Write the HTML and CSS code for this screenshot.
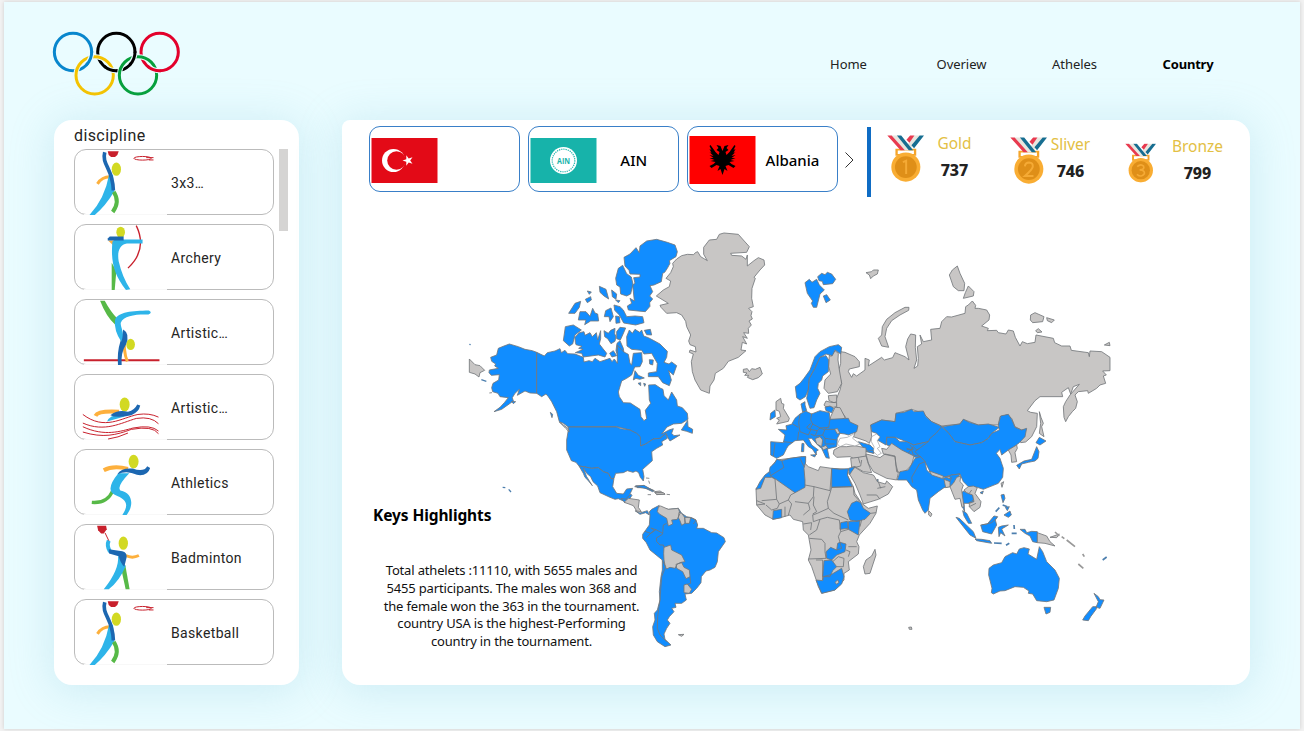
FILE: index.html
```html
<!DOCTYPE html>
<html lang="en">
<head>
<meta charset="utf-8">
<title>Olympics - Country</title>
<link rel="stylesheet" href="styles.css">
</head>
<body>
<svg width="0" height="0" class="defs" aria-hidden="true">
  <symbol id="basketball" viewBox="73 477 279 199">
    <path fill="#c8202c" d="M174 484H207L203 495L196 501H184L177 495Z"/>
    <g fill="none" stroke="#c8202c" stroke-width="3"><ellipse cx="279" cy="505" rx="26" ry="5.500"/><path d="M290 503H312M298 510H312"/></g>
    <ellipse cx="200" cy="538" rx="14" ry="20" fill="#d2d922"/>
    <path d="M143 582Q158 560 182 561" fill="none" stroke="#fdb03d" stroke-width="9"/>
    <path fill="#2eb4e9" d="M178 555H190L193 606Q168 648 135 676H119Q165 628 178 555Z"/>
    <path d="M192 606Q212 635 189 667" fill="none" stroke="#57b947" stroke-width="12"/>
    <path d="M165 487C155 525 190 535 191 602" fill="none" stroke="#1c67b1" stroke-width="11"/>
  </symbol>
  <symbol id="medal" viewBox="80 78 112 142">
    <path d="M110 124V136M164 124V136M108 122H166V138H108Z" fill="#fff" stroke="#f5a52b" stroke-width="5"/>
    <path fill="#e8e6df" d="M92 79H112L150 124H124ZM162 79H180L150 124H130Z"/>
    <path fill="#e83a4f" d="M81 79H94L134 124H121ZM150 79H163L148 101L139 92Z"/>
    <path fill="#176e91" d="M110 79H123L159 124H146ZM179 79H192L162 118L154 109Z"/>
    <circle cx="137" cy="175" r="44" fill="#f9ad33"/><circle cx="137" cy="175" r="33" fill="#df8f18"/>
  </symbol>
</svg>
<div class="page">
  <header class="top">
    <svg class="rings" viewBox="156 94 387 195" fill="none" stroke-width="9">
      <circle cx="219" cy="157" r="56" stroke="#0886cd"/>
      <circle cx="349" cy="157" r="56" stroke="#000"/>
      <circle cx="479" cy="157" r="56" stroke="#e3002b"/>
      <g stroke="#eafcff" stroke-width="15"><path d="M228 227A56 56 0 0 1 249 183M358 227A56 56 0 0 1 379 183M284 171A56 56 0 0 1 320 184M414 171A56 56 0 0 1 450 184"/></g>
      <circle cx="284" cy="227" r="56" stroke="#f5c300"/>
      <circle cx="414" cy="227" r="56" stroke="#07a03c"/>
      <g stroke="#eafcff" stroke-width="15"><path d="M275 160A56 56 0 0 1 263 191M405 160A56 56 0 0 1 393 191M318 204A56 56 0 0 0 349 213M448 204A56 56 0 0 0 479 213"/></g>
      <path d="M275 155A56 56 0 0 1 259 196" stroke="#0886cd"/><path d="M405 155A56 56 0 0 1 389 196M313 200A56 56 0 0 0 352 213" stroke="#000"/><path d="M443 200A56 56 0 0 0 482 213" stroke="#e3002b"/>
    </svg>
    <nav class="nav"><a>Home</a><a>Overiew</a><a>Atheles</a><a class="active">Country</a></nav>
  </header>
  <div class="content">
    <aside class="card sidebar">
      <h2>discipline</h2>
      <div class="list-wrap">
      <div class="list">
        <div class="tile"><svg><use href="#basketball"/></svg><span>3x3<i>...</i></span></div>
        <div class="tile"><svg viewBox="73 28 279 199">
          <path d="M260 33Q295 105 235 161" fill="none" stroke="#c8202c" stroke-width="4"/>
          <ellipse cx="213" cy="53" rx="13" ry="17" fill="#d2d922"/><path fill="#fdb03d" d="M175 78H197L190 92Z"/>
          <path fill="#57b947" d="M186 145L200 170L195 227H186Z"/>
          <path fill="#2eb4e9" d="M188 82Q192 75 205 75H279V87H232C210 90 202 112 207 140Q218 188 242 225L229 227C192 180 183 140 188 82Z"/>
          <path fill="#1c67b1" d="M174 72L180 66H222V78H174Z"/></svg><span>Archery</span></div>
        <div class="tile"><svg viewBox="73 253 279 199">
          <path d="M102 438H330" stroke="#c8202c" stroke-width="6"/>
          <path fill="#57b947" d="M151 258H165Q182 290 203 312L196 330Q169 305 151 258Z"/>
          <path d="M225 360Q220 410 233 441" fill="none" stroke="#fdb03d" stroke-width="9"/>
          <ellipse cx="243" cy="390" rx="13" ry="17" fill="#d2d922"/>
          <path fill="#1c67b1" d="M221 345Q242 358 229 390Q213 414 216 452H205Q202 412 212 382Z"/>
          <path fill="#2eb4e9" d="M298 288Q310 294 297 300C258 299 222 303 213 325C213 342 226 351 215 382Q192 347 196 316C205 292 248 289 298 288Z"/></svg><span>Artistic<i>...</i></span></div>
        <div class="tile"><svg viewBox="73 478 279 199">
          <path d="M137 604Q145 588 208 592" fill="none" stroke="#fdb03d" stroke-width="12"/>
          <ellipse cx="225" cy="570" rx="15" ry="21" fill="#d2d922"/>
          <path fill="#2eb4e9" d="M172 621Q180 602 210 600L225 606Z"/><path fill="#1c67b1" d="M182 602Q205 584 235 592Q255 587 263 570L272 573Q268 593 245 602Q200 612 182 602Z"/>
          <path d="M99 600C165 650 215 610 265 600Q300 595 327 608M99 626C165 655 215 625 260 612Q305 605 327 628M99 637C165 668 215 650 250 641Q305 630 327 650M99 653C160 672 200 662 245 645Q310 633 327 658M175 674Q205 670 235 656" fill="none" stroke="#c8202c" stroke-width="3"/></svg><span>Artistic<i>...</i></span></div>
        <div class="tile"><svg viewBox="73 27 279 199">
          <path d="M162 91Q190 76 235 87" fill="none" stroke="#fdb03d" stroke-width="12"/><ellipse cx="252" cy="65" rx="15" ry="21" fill="#d2d922"/>
          <path d="M126 188Q172 192 189 153" fill="none" stroke="#57b947" stroke-width="10"/>
          <path fill="#2eb4e9" d="M206 100H239Q200 140 212 152C252 160 252 200 231 226H218C240 192 230 180 195 165Q165 150 206 100Z"/>
          <path fill="#1c67b1" d="M203 103Q214 83 249 86Q283 98 293 79L302 84Q294 110 262 105Q232 90 203 103Z"/></svg><span>Athletics</span></div>
        <div class="tile"><svg viewBox="73 253 279 199">
          <path fill="#c8202c" d="M142 258H169L171 269L162 282H154L145 272Z"/><path d="M166 280L178 305" stroke="#c8202c" stroke-width="3"/>
          <path d="M177 303Q170 318 181 337" fill="none" stroke="#2eb4e9" stroke-width="12"/><ellipse cx="221" cy="311" rx="14" ry="20" fill="#d2d922"/>
          <path d="M228 348Q248 358 268 348" fill="none" stroke="#fdb03d" stroke-width="9"/>
          <path fill="#57b947" d="M214 385L227 377L240 450H228Z"/><path fill="#2eb4e9" d="M205 348L228 380Q210 425 177 450H162Q210 390 205 348Z"/>
          <path fill="#1c67b1" d="M177 329L218 335Q232 338 231 353L224 382Q212 370 207 350L178 342Z"/></svg><span>Badminton</span></div>
        <div class="tile"><svg><use href="#basketball"/></svg><span>Basketball</span></div>
      </div>
      <div class="scroll"></div>
      </div>
    </aside>
    <main class="card main">
      <div class="toolbar">
        <div class="flags">
          <div class="flag"><svg viewBox="0 0 66 45"><path fill="#e30a17" d="M0 0H66V45H0Z"/><circle cx="22" cy="22.500" r="11.500" fill="#fff"/><circle cx="25" cy="22.500" r="9.300" fill="#e30a17"/><path fill="#fff" d="M31 22.500L34.800 21.300V17.300L37.200 20.500L41 19.200L38.700 22.500L41 25.800L37.200 24.500L34.800 27.700V23.700Z"/></svg><span></span></div>
          <div class="flag"><svg viewBox="0 0 66 45"><path fill="#17b3aa" d="M0 0H66V45H0Z"/><circle cx="33" cy="22.500" r="13.500" fill="#fff"/><circle cx="33" cy="22.500" r="11.300" fill="none" stroke="#17b3aa" stroke-width="1.200" stroke-dasharray="1.200 1"/><text x="33" y="26.300" class="ain" textLength="13" lengthAdjust="spacingAndGlyphs">AIN</text></svg><span>AIN</span></div>
          <div class="flag"><svg viewBox="0 0 66 48" class="tall"><path fill="#f00" d="M0 0H66V48H0Z"/><path d="M33 15L31 10L27 9L29 12L27 14L30 16L29 19L26 16L21 9L20 10L22 14L20 13L22 17L20 16L24 20L20 19L24 22L20 22L25 24L21 25L26 26L24 28L20 30L22 32L27 29L30 30L28 35L31 33L33 39L35 33L38 35L36 30L39 29L44 32L46 30L42 28L40 26L45 25L41 24L46 22L42 22L46 19L42 20L46 16L44 17L46 13L44 14L46 10L45 9L40 16L37 19L36 16L39 14L37 12L39 9L35 10Z"/></svg><span>Albania</span></div>
        </div>
        <svg class="chev" viewBox="0 0 9 16"><path d="M.5 .5L8 8L.5 15.500" fill="none" stroke="#333" stroke-width="1"/></svg>
        <div class="bar"></div>
        <div class="medals">
          <div class="medal gold"><svg viewBox="80 78 112 142"><use href="#medal" x="80" y="78" width="112" height="142"/><path d="M128 160L138 156V196" class="num"/></svg><p><b>Gold</b><strong>737</strong></p></div>
          <div class="medal silver"><svg viewBox="80 78 112 142"><use href="#medal" x="80" y="78" width="112" height="142"/><path d="M125 167Q126 155 138 155Q150 156 149 168Q147 177 125 196H151" class="num"/></svg><p><b>Sliver</b><strong>746</strong></p></div>
          <div class="medal bronze"><svg viewBox="80 78 112 142"><use href="#medal" x="80" y="78" width="112" height="142"/><path d="M124 162Q137 150 147 160Q152 173 133 174Q153 175 150 188Q140 203 123 190" class="num"/></svg><p><b>Bronze</b><strong>799</strong></p></div>
        </div>
      </div>
      <div class="stage">
      <svg class="map" viewBox="342 200 908 485" stroke="#74777b" stroke-width="2.500" stroke-linejoin="round">
        <g transform="translate(460 220) scale(.33333)">
          <g class="off">
            <path d="M589 228L610 210L628 200L632 183L618 175L632 158L640 140L638 130L650 117L665 107L682 103L701 104L706 98L713 95L722 110L742 122L731 103L731 82L748 60L770 58L778 43L792 39L835 43L850 60L868 80L860 97L812 100L815 106L845 108L858 118L862 105L862 138L882 122L895 113L912 120L914 135L900 150L882 172L886 175L876 205L875 235L880 260L866 265L876 275L873 287L877 297L867 303L874 315L865 325L866 340L851 338L862 355L848 350L860 372L847 367L843 390L858 392L835 412L805 424L790 445L766 460L762 480L750 498L748 520L722 510L705 480L697 455L694 425L700 402L688 397L690 390L708 396L706 380L690 374L686 363L692 345L680 320L677 304L665 285L650 278L620 280L603 262L600 256L625 250Z"/>
            <path d="M850 448L862 446L868 455L875 446L886 448L900 442L907 462L895 473L878 479L862 472L866 466L854 466L861 459L850 457ZM28 417L45 434L60 437L74 451L60 458L57 471L45 462L28 457ZM583 815L600 813L615 822L590 824ZM558 774L568 775M566 782L569 791"/>
          </g>
          <g class="on">
            <path d="M492 112L510 102L528 83L538 98L540 78L560 63L590 58L622 67L645 75L652 95L648 110L628 122L630 130L622 145L614 157L608 160L604 185L582 195L570 197L578 215L569 228L578 237L569 248L570 259L556 275L534 273L505 270L502 258L515 250L510 235L523 243L518 195L525 190L521 173L540 171L540 163L510 162L507 151L495 138Z"/>
            <path d="M488 136L475 145L467 175L470 195L480 201L482 222L500 228L512 222L519 192L514 171L500 161Z"/>
            <path d="M418 199L438 208L446 237L432 228L420 217ZM455 210L470 222L468 238L457 230ZM467 240L480 242L475 248ZM382 213L394 216L388 223ZM376 238L392 230L394 240L382 248ZM326 280L345 250L362 244L358 262L345 280ZM355 300L360 275L378 275L390 289L398 265L405 279L413 282L416 303L392 303L374 314L378 300ZM433 290L437 272L453 264L460 290L450 305L447 290ZM462 255L480 260L490 270L500 290L525 288L548 290L552 308L527 315L491 309L478 285L464 271ZM467 288L478 290L480 308L468 310Z"/>
            <path d="M316 320L340 315L364 330L345 345L338 372L328 378L310 362ZM346 367L345 352L358 338L372 335L375 346L390 338L397 350L409 338L413 360L422 332V356L418 372L428 385L440 400L435 411L415 405L370 411L365 400L346 398L369 388L356 385L366 379L348 374ZM432 332L445 340L452 331L465 325L464 341L468 350L465 364L453 371L443 356L434 350ZM470 335L480 322L497 324L488 345L481 360L470 356ZM471 370L480 362L490 385L492 400L483 402L478 423L468 392ZM449 400L460 392L470 407L456 411Z"/>
            <path d="M500 350L508 330L517 340L525 328L539 337L545 330L551 348L565 353L580 361L600 372L622 394L620 412L612 427L627 432L635 426L650 437L640 465L626 452L634 480L628 497L608 488L595 470L565 470L565 459L590 455L592 430L575 400L552 402L545 391L515 388L501 378ZM553 331L571 328L575 345L560 344ZM568 419L580 420L578 435L569 432ZM520 480L525 452L535 466L553 474L539 478L528 475ZM534 490L542 488L542 497ZM551 490L557 492L554 499Z"/>
            <path d="M230 397L217 392L195 388L175 380L148 372L132 378L115 385L110 405L92 412L95 424L107 432L104 438L115 445L88 450L87 458L94 466L118 464L116 480L99 490L95 503L98 515L114 520L120 530L145 533L133 548L120 562L102 575L125 568L160 543L157 533L165 520L178 508L172 526L195 513L210 519L230 520Z"/>
            <path d="M230 397L253 408L262 398L285 393L300 386L304 398L315 391L323 401L345 402L370 412L372 426L387 422L397 425L405 415L420 425L450 415L456 425L463 417L472 430L472 375L490 395L505 403L510 430L515 435L520 400L545 398L547 425L540 440L524 441L515 465L500 475L485 483L475 516L478 530L490 548L511 549L540 568L543 590L552 602L560 596L556 571L572 550L568 540L566 495L586 494L602 505L609 508L612 527L625 540L635 516L650 540L652 558L667 563L682 580L684 598L665 610L640 612L621 621L605 642L627 630L640 626L635 640L642 647L660 645L630 663L622 650L618 640L600 655L580 657L557 672L542 678L535 645L510 630L470 620L325 621L310 610L298 605L290 575L275 545L265 530L258 522L245 530L230 520Z"/>
            <path d="M325 621H470L482 626L510 630L530 640L541 650L542 678L557 672L580 657L600 655L618 640L622 655L605 665L608 675L590 685L575 695L577 722L548 748L552 770L550 783L541 772L536 758L528 753L519 757L502 752L490 758L467 760L462 775L454 777L445 760L430 755L415 743L395 745L375 741L357 738L348 727L334 722L325 701L320 690V660L324 636Z"/>
            <path d="M357 738L375 741L395 745L415 743L430 755L445 760L454 777L462 775L458 800L470 820L490 822L500 807L518 805L510 822L505 838L497 846L475 836L465 838L450 832L420 818L413 798L399 785L392 770L380 760L370 745L380 770L397 797L385 782L375 772L370 760Z"/>
            <path d="M527 797H550L565 804L583 812L578 815L552 803L532 803ZM664 630L672 618L683 601L684 620L698 628L697 640L680 634ZM155 544L167 545L160 551ZM88 519L96 518M271 577L278 583L276 593ZM483 835L500 838L505 845L495 848ZM563 824H573M620 823L630 824"/>
          </g>
          <path fill="none" stroke="#4d7fae" stroke-width="4" d="M128 802L136 803M146 808L153 816M28 373L32 374M64 479L79 484"/>
          <path d="M298 606L325 626L328 636L317 625Z" fill="#c8c6c5"/>
        </g>
        <g transform="translate(600 470) scale(.33333)">
          <path class="on" d="M150 135L148 125L155 118L178 106L175 112L205 118L235 115L245 130L260 140L275 143L288 150L293 165L290 175L310 175L335 188L350 189L372 203L376 215L355 245L352 275L345 292L330 300L318 303L304 320L303 338L290 355L275 370L255 372L259 390L245 400L225 400L228 412L215 415L222 425L208 440L202 450L210 460L200 475L192 492L195 508L213 525L195 530L172 515L160 495L158 470L165 450L163 430L172 420L180 390L178 365L183 320L187 300L187 270L150 240L139 218L128 205L128 193L138 179L148 165Z"/>
          <path class="on" d="M105 122L120 129L142 122L148 135L137 128L120 133ZM78 86L92 72L96 76L84 94ZM104 50L132 46L160 62L142 56Z"/>
          <g class="off"><path d="M175 112L182 108L205 118L235 115L240 130L232 148L215 150L218 162L205 168L200 145L178 132L172 125ZM237 127L245 130L254 142L255 160L245 166L240 152L235 143ZM254 142L272 143L268 160L256 160ZM192 232L212 225L215 240L245 255L255 275L243 277L232 282L225 295L210 292L200 297L196 290L192 270L191 250ZM228 283L245 278L252 292L268 300L270 320L258 326L248 305L230 295ZM252 345L262 342L275 358L268 370L252 368ZM72 97L85 85L118 90L115 112L124 125L110 123L100 107L84 101ZM165 67L190 68L195 73L170 73ZM235 494L252 493L245 499Z"/></g>
          <path fill="none" d="M187 272L197 290L185 320L182 360L179 395L173 440L172 475L180 495L200 515M135 184L152 190L162 182L155 174M139 203L153 189L168 179L188 190L187 193L169 204L170 215L180 225L190 225L192 232M188 190L190 165L200 160M152 174L168 179M270 320L272 340L262 343M272 143L288 150L280 162"/>
        </g>
        <g transform="translate(740 220) scale(.33333)">
          <g class="off">
            <path d="M302 395L315 397L345 410L358 425V440L328 447L325 455L335 472L340 461L350 468L375 450L375 415L388 420L385 438L425 412L433 420L458 413L465 398L495 410L507 420L497 380L503 357L512 342L527 345L526 382L530 420L522 445L533 438L535 415L532 380L545 372L540 345L545 355L550 365L575 360L572 328L600 325L605 305L620 290L635 291L675 280L677 260L685 255L697 243L707 256L705 265L715 265L740 270L749 285L747 300L725 318L745 325L742 332L770 331L775 338L798 342L805 330L820 333L826 352L840 378L847 365L862 371L885 367L888 345L940 355L944 368L965 378H990L994 391L1045 398L1048 410L1050 393L1085 395L1110 412V452L1088 453L1099 465L1090 468L1097 490L1080 495L1070 505L1045 520L1043 512L1015 515L1005 525L1012 545L1007 565L997 575L985 590L977 605L972 592L970 560L977 545L990 525L1018 493L1000 500L992 522L985 503L965 517L968 530L900 530L885 542L862 572L872 577L892 580L890 620L875 650L857 666L842 668L840 655L858 628L845 630L825 620L815 595L800 585L780 590L775 615L715 615L670 598L660 612L605 618L575 605L550 580L515 568L468 580L465 605L425 600L392 615L395 650L388 670L378 663L340 650L352 620L325 605L312 585L290 560L288 540L300 510L305 490L295 455L302 430Z"/>
            <path d="M898 575L903 592L910 610L905 620L912 650L898 640L902 610Z"/>
            <path d="M378 158L395 155L400 150L415 150L412 162L400 168L392 176L388 165ZM628 165L637 150L652 138L660 160L674 190L672 212L655 212L640 200ZM670 235L676 218L685 198L702 215L700 228ZM415 355L425 345L427 320L440 298L465 278L495 262H507L506 271L480 285L455 302L440 325L435 350L446 382L425 378ZM872 285L885 278L912 290L908 305L878 308L871 300ZM920 293L943 300L935 308L922 302ZM887 332L895 326L906 336L892 338ZM1093 375L1108 367L1110 377Z"/>
            <path d="M268 405L273 410L285 392L295 400L294 420L298 450L305 490L292 515L265 520L252 505L255 480L272 462L266 440ZM265 527L290 525V545L282 548L267 542ZM252 555L258 543L272 547L290 548V560L280 562L255 559ZM272 590L285 562L300 563L315 592L305 600L270 598ZM108 545L122 535L125 550L132 553L130 565L148 595L145 604L110 612L118 600L110 595L122 590L118 574L108 570Z"/>
          </g>
          <g class="on">
            <path d="M195 188L208 178L216 187L230 178L238 195L253 210L240 222L230 262L220 262L214 250L218 243L202 220ZM233 170L245 160L255 164L262 157L275 162L287 178L278 191L250 194L247 184L237 182ZM250 228L260 224L271 240L258 248Z"/>
            <path d="M166 500L180 490L192 475L210 450L225 410L240 395L268 380L295 374L305 382L302 402L285 390L277 407L258 402L240 412L225 445L208 475L205 510L196 530L180 540L170 533Z"/>
            <path d="M240 412L258 407L266 420L265 455L248 468L245 480L235 490L233 505L240 520L230 540L222 563L210 565L200 535L205 510L208 475L225 445ZM255 562L270 558L281 565L275 578L258 572ZM183 552L195 545V555L200 572L188 576ZM92 580L105 570L106 590L90 600Z"/>
            <path d="M115 628L140 630L138 617L155 613L165 595L180 582L197 573L215 582L240 572L268 578L270 598L325 595L330 606L354 617L350 635L325 645L315 642L300 640L292 655L290 680L262 687L268 715L258 713L245 685L236 678L215 655L205 655L215 675L235 690L229 694V705L217 687L205 680L190 660L165 662L145 677L140 685L130 705L110 715L92 705V665L130 668L135 645Z"/>
            <path d="M355 665L390 675L405 690L400 700L375 690ZM186 670L192 671L191 695L184 695ZM212 705L228 704L224 711Z"/>
            <path d="M392 615L425 600L465 605L468 580L492 577L515 568L522 575L550 573L558 590L575 605L607 620L585 645V662L565 665L520 675L500 665L465 652L440 652L438 675L412 660L420 653L410 640L395 635Z"/>
            <path d="M440 652L465 652L480 665L500 665L520 675L565 665L570 672L545 685L535 695L540 715L520 710L500 706L485 690L460 680L440 675ZM607 620L660 612L670 598L688 607L715 615L745 612L778 622L755 640L745 655L725 668L690 675L645 665L625 640Z"/>
          </g>
          <path fill="#c8c6c5" d="M225 656L240 650L248 660L245 680L230 672ZM284 628L292 625L300 640L292 642ZM245 682L258 676L263 684L250 690ZM282 690L300 680L320 680L345 677L378 684L378 710L340 715L330 710L290 712L280 702Z"/>
          <path fill="none" d="M215 580L212 600L218 612L240 624L266 622L270 598M212 610L200 622L212 630L205 645L180 635L176 608L180 582M175 622L158 612M176 635L173 660M130 665L158 668M105 670L100 708M218 612L210 628L232 632L240 624L254 630M232 632L225 648L212 642M254 630L262 622M254 630L248 645L228 648M248 645L255 655L290 660M254 628L285 628M255 655L255 672L284 672M500 706L520 680L530 690L545 685M510 675L520 688L500 688"/>
          <path fill="#fff" stroke-width="1.500" d="M292 672L300 655L322 652L345 640L338 655L360 672L345 678L318 672L300 680Z"/>
          <path fill="#fff" stroke-width="1.500" d="M395 650L410 642L420 650L412 662L420 680L412 685L424 700L412 706L400 695L402 680L394 665Z"/>
        </g>
        <g transform="translate(740 380) scale(.33333)">
          <g class="off">
            <path d="M60 320L75 290L90 275L98 255L110 240L150 235L187 230H197L195 250L205 260L235 272L240 260L275 265L325 268L322 285L340 320L345 340L365 370L385 385L412 378L408 400L390 430L358 465L350 485L357 500L355 522L325 545L328 570L312 580L312 600L285 630L245 640L235 620L228 598L215 560L205 540L213 510L205 465L190 450L188 425L160 418L150 405L125 412L100 418L75 405L50 375L48 325Z"/>
            <path d="M405 508L408 525L390 580L375 582L370 560L378 540L395 528ZM326 278L345 262L370 278L400 285L405 292L412 305L436 312L440 303L458 320L445 342L415 358L370 372L360 345L345 310ZM332 235L355 232L378 228L383 245L395 278L370 275L345 260L335 262ZM378 222L400 227L420 233L435 222L465 228L468 255L475 280L470 300L440 295L420 285L400 275L385 250ZM425 205L440 208L455 190L485 210L522 228L515 255L490 280L470 275L465 230L430 222ZM566 392L576 402L572 410L566 405Z"/>
          </g>
          <g class="on">
            <path d="M48 328L60 305L75 285L88 275L90 262L105 248L110 238L125 242L150 235L187 230H197V245L192 265L195 300V322L165 338L108 298L95 292H75L62 325ZM275 265L300 268L325 266L322 285L337 320L275 322ZM322 395L335 370L350 363L362 368L370 385L392 400L375 418L350 424L330 420ZM325 425L360 422L355 465L325 448ZM302 428L322 424L325 445L300 448ZM258 515L272 502L290 510L293 490L300 487L318 492L315 515L290 525L275 540L260 535ZM252 542L275 540L290 560L278 572L270 590L248 590ZM228 600L248 602L250 590L275 583L305 565L312 590L305 612L285 630L245 640ZM100 392L125 388V413L98 418ZM326 265L345 260L338 270L328 285ZM378 215L402 220L398 210ZM411 298L415 299L413 305Z"/>
          </g>
          <path fill="#c8c6c5" d="M285 607L293 600L297 607L290 613Z"/>
          <path fill="none" d="M90 275V285L105 297L110 358L65 362M50 362L75 372L50 375M110 358L118 372L145 360L152 345L165 338M78 375L95 390L112 385L118 372M145 360L155 372L145 405M135 380V410M165 365L205 370L220 350L222 320L195 315M222 320L270 332L275 267M275 322L270 340L262 365L265 385M222 350L220 375L230 395L218 402M205 370L210 388L190 405M265 385L232 400L218 405L220 425L240 418L262 412M265 385L282 400L325 420M262 412L298 420M240 418L230 450L208 465M190 432L215 428L212 450M298 420L302 455L295 470L305 505L290 510M208 475L245 478L255 490V515L258 535L205 537M228 540H248V600M302 455L325 448M325 500L350 500M318 510L330 515L325 530M278 545L295 530L312 535L310 560L290 560M340 320L342 345L360 365M275 322L337 320M392 400L408 398M365 420L360 440M345 262L362 258L365 240M380 345L410 345L420 358M412 325L436 320M125 242L132 262L90 288M180 235L192 260M415 305L422 325M355 232L360 250"/>
        </g>
        <g transform="translate(900 390) scale(.33333)">
          <g class="on">
            <path d="M125 110L145 128L165 155L210 165L245 158L265 145L275 130L298 120L295 105L302 78L325 73L335 88L345 112L365 120L380 115L375 140L358 158L340 172L325 180L305 195L300 178L289 190L300 205L310 235L308 262L295 280L250 298L232 292L205 290L190 275L180 252L155 255L130 262L90 245L75 215L60 200L45 185L65 170L85 155L90 145L108 130Z"/>
            <path d="M-8 270L0 245L25 240L45 205L62 200L75 215L80 240L90 250L130 265L155 255L180 252L175 262L160 280L150 290L132 293L115 305L90 325L85 360L75 370L68 360L55 330L50 300L35 290L20 270Z"/>
            <path d="M183 312L190 303L200 308L218 315L222 335L205 340L192 340L194 365L185 345ZM188 362L200 370L215 400L205 400L192 378ZM168 382L178 385L220 425L228 445L210 435L190 410ZM225 447L245 448L270 452L275 460L230 452ZM242 405L262 402L282 378L293 380L286 390L290 405L275 432L248 425ZM295 412L305 408L325 405L305 417L315 438L302 428L297 440ZM360 418L375 418L380 428L395 424L412 425V458L398 455L390 438L375 430ZM303 315L312 313L315 325L309 338ZM316 352L328 350L322 362ZM312 375L330 363L334 375L325 382ZM240 308L250 303L247 312Z"/>
            <path d="M408 158L418 142L438 153L420 165ZM410 170L417 185L414 205L405 213L385 217L365 222L358 237L350 226L372 213L395 208ZM267 535L280 525L305 518L315 500L338 488L350 492L358 477L372 473L388 477L384 492L410 508L418 470L428 485L440 515L465 540L478 565L475 595L462 630L440 635L410 632L398 612L385 610L387 603L370 592L345 590L315 602L300 603L280 612L274 608L276 595L266 555ZM432 652L452 652L450 667L438 672ZM582 610L595 620L600 629L612 630L600 655L588 652L595 635ZM578 650H589V657L572 680L565 692L548 690L555 678Z"/>
          </g>
          <g class="off"><path d="M88 243L130 258L128 266L95 255ZM134 260L150 260L150 266ZM132 268L150 275V290L137 293ZM150 290L160 280L170 262L182 258L180 275L190 285L185 300L192 350L186 352L180 325L165 328ZM192 300L205 290L220 288L232 293L225 310L243 335L240 352L222 365L208 350V340L222 335L218 315L200 308ZM303 280L311 275L306 292ZM325 180L350 165L352 175L345 188L350 215L335 217L333 195ZM412 428L440 438L450 455L465 468L435 460L412 458ZM450 442L478 432L470 443ZM26 712L34 711L36 718H28Z"/></g>
          <path fill="none" d="M75 215L58 222L35 262L38 278M205 340L220 330M208 350L228 340M155 262L150 275M62 200L40 195L35 180L20 175M245 405L275 398L292 382M208 310L215 300"/>
          <path fill="none" stroke="#4d7fae" stroke-width="5" d="M282 459L305 460M342 405L343 417M335 430L350 430M318 466L328 460M608 510L620 501M287 365L298 353M308 345L322 350"/>
          <path fill="none" stroke="#999" stroke-width="5" d="M485 440L493 446M500 450L525 470M548 492L553 500M535 522L550 535M465 426L478 438"/>
        </g>
      </svg>
      <section class="notes">
        <h3>Keys Highlights</h3>
        <p>Total athelets :11110, with 5655 males and<br>5455 participants. The males won 368 and<br>the female won the 363 in the tournament.<br>country USA is the highest-Performing<br>country in the tournament.</p>
      </section>
      </div>
    </main>
  </div>
</div>
</body>
</html>
```

FILE: styles.css
```css
* { box-sizing: border-box; }
body { margin: 0; padding: 2px 4px; height: 731px; background: #f2f2f2; font-family: "Noto Sans", "Open Sans", sans-serif; overflow: hidden; }
h2, h3, p { margin: 0; }
.defs { display: block; height: 0; }
.page { height: 727px; background: #eafcff; padding: 29px 50px 0; box-shadow: 0 0 4px rgba(0,0,0,.15); }
.top { display: flex; align-items: flex-start; justify-content: space-between; height: 89px; }
.rings { width: 129px; height: 65px; margin: .3px 0 0 -2px; }
.nav { display: flex; margin-top: 24px; padding-right: 36px; font-size: 13px; line-height: 18px; color: #222; }
.nav a { width: 113px; text-align: center; letter-spacing: -.05px; }
.nav .active { font-weight: 700; color: #000; letter-spacing: -.2px; }
.nav a:last-child { width: 52px; margin-left: 31px; }
.content { display: flex; justify-content: space-between; height: 565px; }
.card { background: #fff; border-radius: 18px; box-shadow: 0 4px 42px 4px rgba(115, 190, 210, .23); }
.sidebar { width: 245px; padding: 4px 11px 0 20px; font-family: Roboto, sans-serif; }
.sidebar h2 { font-size: 16px; font-weight: 400; line-height: 23px; letter-spacing: .4px; color: #252423; height: 25px; }
.list-wrap { display: flex; justify-content: space-between; }
.list { width: 200px; display: flex; flex-direction: column; gap: 9px; }
.tile { height: 66px; border: 1px solid #bbb; border-radius: 12px; display: flex; align-items: center; gap: 4px; font-size: 14px; letter-spacing: .35px; color: #252423; }
.tile svg { width: 93px; height: 66px; flex: none; margin: -1px 0 -1px -1px; background: linear-gradient(#f8f8f8, #f8f8f8) 100% 100% / 83px 1px no-repeat; }
.tile span { padding-top: 2px; }
.tile i { font-style: normal; letter-spacing: -.9px; }
.scroll { width: 9px; height: 82px; background: #d5d4d3; }
.main { width: 908px; display: flex; flex-direction: column; border-top-left-radius: 8px; }
.toolbar { height: 80px; display: flex; padding: 6px 0 0 27px; }
.flags { display: flex; gap: 8.500px; }
.flag { width: 150.500px; height: 66px; border: 1px solid #397fc8; border-radius: 11px; display: flex; align-items: center; font-size: 15px; font-weight: 500; color: #000; padding-left: 1px; }
.flag svg { width: 67px; height: 45px; flex: none; margin-top: 2px; }
.flag .tall { height: 48px; margin-left: -.5px; }
.flag span { flex: 1; text-align: center; padding-right: 7px; padding-top: 1px; }
.ain { font: 700 9px "Open Sans", sans-serif; fill: #17b3aa; text-anchor: middle; }
.chev { width: 9px; height: 16px; margin: 26px 0 0 7px; }
.bar { width: 4px; height: 70px; background: #0f6cc4; margin: 1px 0 0 13px; }
.medals { display: flex; align-items: flex-start; }
.medal { display: flex; align-items: flex-start; }
.medal svg { width: 37px; height: 47px; }
.medal p { display: flex; flex-direction: column; align-items: center; }
.medal b { font-size: 15.500px; font-weight: 400; line-height: 22px; color: #e3c044; }
.medal strong { font-size: 16px; line-height: 22px; margin-top: 5px; color: #222; font-weight: 800; }
.gold { width: 124px; padding: 9px 0 0 16px; }
.gold p { width: 60px; margin: -3px 0 0 1px; }
.silver { width: 114px; padding: 11px 0 0 15px; }
.silver p { width: 48px; margin-top: -4px; }
.bronze { padding: 17px 0 0 16px; }
.bronze svg { width: 31px; height: 40px; }
.bronze p { width: 82px; margin: -8px 0 0 1px; }
.num { fill: none; stroke: #f5aa35; stroke-width: 6; }
.stage { display: grid; height: 485px; }
.map { grid-area: 1 / 1; width: 908px; height: 485px; }
.on { fill: #118dff; }
.off { fill: #c8c6c5; }
.notes { grid-area: 1 / 1; padding: 304px 0 0 31px; width: 330px; }
.notes h3 { font-size: 15.500px; line-height: 23px; letter-spacing: -.1px; color: #000; }
.notes p { margin: 35px 0 0 -13px; width: 303px; text-align: center; font-size: 13px; letter-spacing: -.17px; line-height: 17.800px; color: #111; white-space: nowrap; }
```
